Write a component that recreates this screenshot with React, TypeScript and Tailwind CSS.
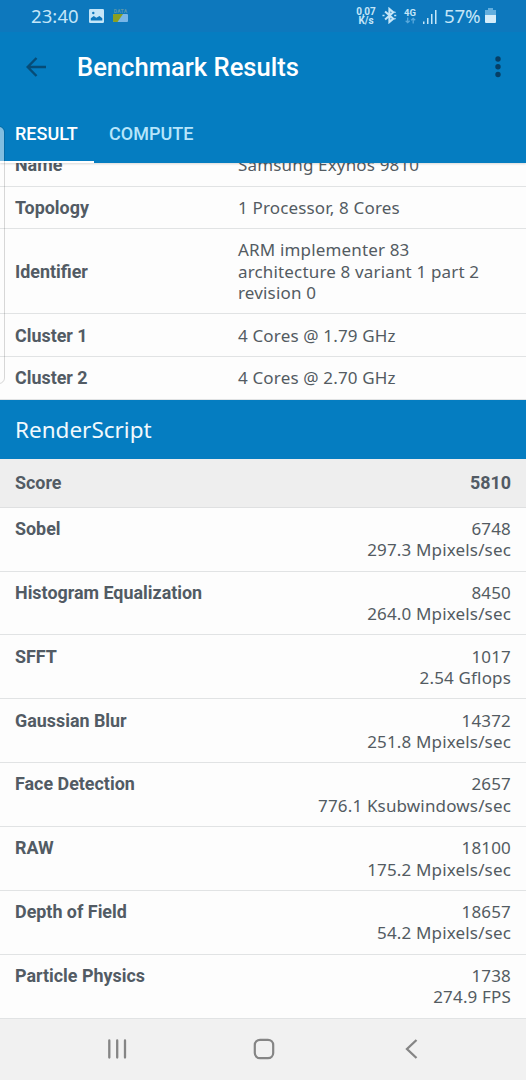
import React from "react"

type Row = { label: string; value: string }
type Score = { label: string; score: string; rate: string }

const system: Row[] = [
  { label: "Name", value: "Samsung Exynos 9810" },
  { label: "Topology", value: "1 Processor, 8 Cores" },
  {
    label: "Identifier",
    value: "ARM implementer 83 architecture 8 variant 1 part 2 revision 0",
  },
  { label: "Cluster 1", value: "4 Cores @ 1.79 GHz" },
  { label: "Cluster 2", value: "4 Cores @ 2.70 GHz" },
]

const scores: Score[] = [
  { label: "Sobel", score: "6748", rate: "297.3 Mpixels/sec" },
  { label: "Histogram Equalization", score: "8450", rate: "264.0 Mpixels/sec" },
  { label: "SFFT", score: "1017", rate: "2.54 Gflops" },
  { label: "Gaussian Blur", score: "14372", rate: "251.8 Mpixels/sec" },
  { label: "Face Detection", score: "2657", rate: "776.1 Ksubwindows/sec" },
  { label: "RAW", score: "18100", rate: "175.2 Mpixels/sec" },
  { label: "Depth of Field", score: "18657", rate: "54.2 Mpixels/sec" },
  { label: "Particle Physics", score: "1738", rate: "274.9 FPS" },
]

const StatusBar = () => (
  <div className="flex h-8 items-center justify-between bg-[#0d78bd] pl-[31px] pr-[30px] text-[#c5e6f8]">
    <div className="flex items-center">
      <span className="w-[58px] font-['Noto_Sans',sans-serif] text-[18.5px] leading-8 tracking-[0.1px]">
        23:40
      </span>
      <svg width="15" height="14" viewBox="0 0 15 14">
        <rect width="15" height="14" rx="1.2" fill="#c5e6f8" />
        <path d="M1.800 11.500V9.300l3-2.300 2.500 1.800L10.500 7l2.800 2.300v2.200z" fill="#0d78bd" />
        <circle cx="4.300" cy="4" r="1.200" fill="#0d78bd" />
      </svg>
      <div className="ml-[9px] flex w-[15px] -translate-y-px flex-col items-center">
        <span className="whitespace-nowrap font-[Roboto,sans-serif] text-[5px] font-bold leading-[6px] tracking-[0.3px] text-[#5b99ab]">
          DATA
        </span>
        <svg width="15" height="8" viewBox="0 0 15 8">
          <rect width="15" height="8" rx="1" fill="#78b6e8" />
          <path d="M1 0h9L4.500 8H1Q0 8 0 7V1Q0 0 1 0" fill="#8a9f21" />
        </svg>
      </div>
    </div>
    <div className="flex items-center">
      <div className="flex w-5 flex-col items-center font-[Roboto,sans-serif] text-[10px] font-bold leading-[9.5px]">
        <span>0,07</span>
        <span>K/s</span>
      </div>
      <svg className="ml-[6px] mr-px -translate-y-px" width="15" height="17" viewBox="0 0 16 17" fill="none" stroke="currentColor" strokeWidth="2.200">
        <path d="M3.300 4.300 12 12 7.900 15.500V1.500L12 5 3.300 12.700" />
        <path d="M.5 8.500h2.200M13 8.500h2.200M13.300 5.500l1-.8M13.300 11.500l1 .8" strokeWidth="1.600" />
      </svg>
      <div className="ml-[6px] flex w-3 flex-col items-center">
        <span className="font-[Roboto,sans-serif] text-[9.5px] font-bold leading-[9px]">4G</span>
        <svg width="11" height="7" viewBox="0 0 11 7" fill="none" stroke="#58a8dc" strokeWidth="1.300">
          <path d="M2.700.5v5M.7 3.700l2 2 2-2M8.200 6.500v-5M6.200 3.300l2-2 2 2" />
        </svg>
      </div>
      <svg className="ml-[7px]" width="15" height="15" viewBox="0 0 15 15" fill="currentColor">
        <path d="M0 12.500h1.500V15H0zM4 9h1.500v6H4zM8 5h1.500v10H8zM12 1h1.500v14H12z" />
      </svg>
      <span className="ml-[6px] w-[38px] whitespace-nowrap font-['Noto_Sans',sans-serif] text-[18.8px] leading-8 tracking-[-0.2px]">
        57%
      </span>
      <svg className="ml-[3px] -translate-y-px" width="11" height="15" viewBox="0 0 11 15">
        <path d="M3 0h5v2h3v5H0V2h3z" fill="#62aede" />
        <path d="M0 7h11v7q0 1-1 1H1q-1 0-1-1z" fill="#d5edfa" />
      </svg>
    </div>
  </div>
)

const Header = () => (
  <header className="relative z-10 h-[163px] shrink-0 bg-[#057dc1] shadow-[0_1px_2px_rgba(0,0,0,0.15)]">
    <StatusBar />
    <div className="flex h-[70px] items-center pl-[26px] pr-[25px]">
      <svg width="20" height="20" viewBox="0 0 20 20" fill="none" stroke="#064c77" strokeWidth="2.400">
        <path d="M20 10H2M10.500 1 1.700 10l8.800 9" />
      </svg>
      <h1 className="ml-[31px] flex-1 font-[Roboto,sans-serif] text-[25.6px] font-medium text-white">
        Benchmark Results
      </h1>
      <svg width="6" height="22" viewBox="0 0 6 22" fill="#063f66">
        <circle cx="3" cy="3" r="2.700" />
        <circle cx="3" cy="10.800" r="2.700" />
        <circle cx="3" cy="18.500" r="2.700" />
      </svg>
    </div>
    <nav className="flex h-[61px] font-[Roboto,sans-serif] text-[18px] font-medium leading-[64px]">
      <span className="w-[94px] border-b-2 border-white pl-[15px] text-white">RESULT</span>
      <span className="pl-[15px] text-[#b6e5fb]">COMPUTE</span>
    </nav>
  </header>
)

const label = "font-[Roboto,sans-serif] text-[17.9px] font-bold text-[#525b64]"
const value =
  "font-['Noto_Sans',sans-serif] text-[17px] leading-[21.3px] tracking-[0.16px] text-[#535b62]"

const SystemTable = () => (
  <div className="-mt-[19px] h-[255.5px] shrink-0">
    {system.map((row) => (
      <div
        key={row.label}
        className="flex min-h-[42.6px] items-center border-b border-[#e1e3e4] py-[10.15px] pl-[15px]"
      >
        <span className={`w-[223px] leading-[21.3px] ${label}`}>{row.label}</span>
        <span className={`w-[250px] ${value}`}>{row.value}</span>
      </div>
    ))}
  </div>
)

const ScoreTable = () => (
  <div className="shrink-0">
    <div className="flex h-[48.7px] items-center justify-between border-b border-[#dfe0e1] bg-[#eeeeee] px-[15px] pt-[2px]">
      <span className={label}>Score</span>
      <span className={label}>5810</span>
    </div>
    {scores.map((row) => (
      <div
        key={row.label}
        className="flex h-[63.87px] justify-between border-b border-[#e1e3e4] px-[15px] pt-[10.3px]"
      >
        <span className={`leading-[21.3px] ${label}`}>{row.label}</span>
        <div className={`flex flex-col text-right ${value}`}>
          <span>{row.score}</span>
          <span>{row.rate}</span>
        </div>
      </div>
    ))}
  </div>
)

const NavBar = () => (
  <div className="flex flex-1 items-start justify-between bg-[#f1f1f1] pl-[107px] pr-[108px] pt-5">
    <svg width="20" height="20" viewBox="0 0 20 20" stroke="#858585" strokeWidth="2.300" strokeLinecap="round">
      <path d="M2.300 1.500v17M10.200 1.500v17M18 1.500v17" />
    </svg>
    <svg className="-ml-[5px] -mt-px" width="22" height="22" viewBox="0 0 22 22" fill="none" stroke="#858585" strokeWidth="2.200">
      <rect x="1.800" y="1.800" width="18.400" height="18.400" rx="5.200" />
    </svg>
    <svg width="13" height="20" viewBox="0 0 13 20" fill="none" stroke="#858585" strokeWidth="2.300">
      <path d="M11.500 1 2 10l9.500 9" />
    </svg>
  </div>
)

const App = () => {
  return (
    <div className="relative flex h-[1080px] w-[526px] flex-col overflow-hidden bg-[#fdfdfd]">
      <Header />
      <SystemTable />
      <h2 className="z-[1] h-[59.5px] shrink-0 bg-[#057dc1] pl-[15px] font-['Noto_Sans',sans-serif] text-[22.5px] leading-[60px] text-[#f1f9fd]">
        RenderScript
      </h2>
      <ScoreTable />
      <NavBar />
      {/* edge panel handle */}
      <div className="absolute -left-2 top-[126px] z-20 h-[258px] w-[13px] rounded-[6px] border border-[#00000026]">
        <div className="h-[35px] rounded-t-[5px] bg-[#ffffff80]" />
      </div>
    </div>
  )
}

export default App
